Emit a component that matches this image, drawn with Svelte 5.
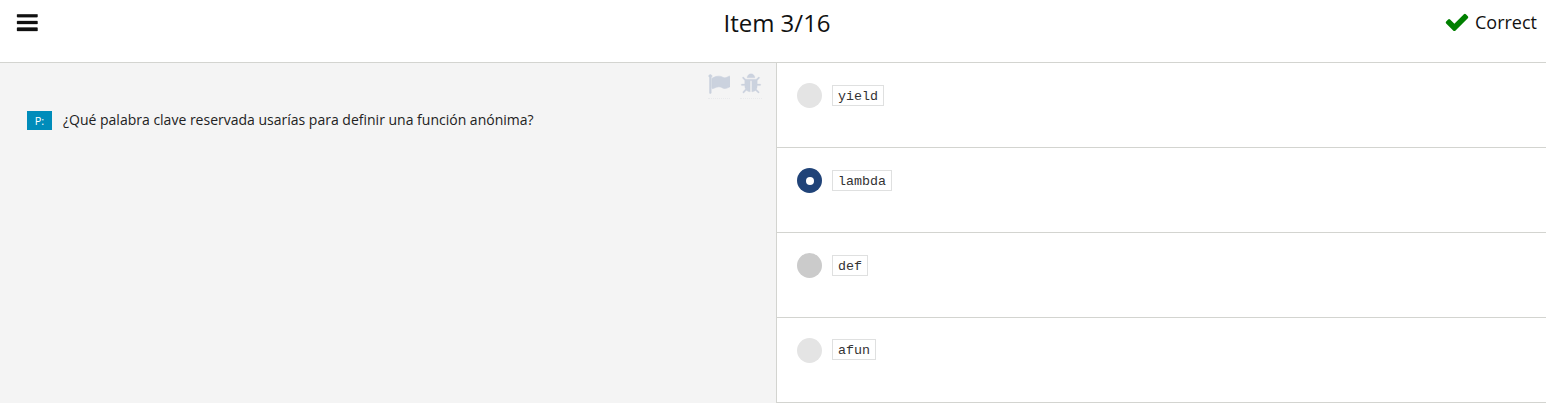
<script>
  const options = [
    { label: 'yield', state: 'idle' },
    { label: 'lambda', state: 'selected' },
    { label: 'def', state: 'hover' },
    { label: 'afun', state: 'idle' }
  ];
</script>

<div class="page">
  <header>
    <button class="menu" aria-label="Menu">
      <svg width="22" height="18" viewBox="0 0 22 18"><path d="M1.6 .2h19.4q.6 0 .6.6v1.8q0 .6-.6.6H1.6q-.6 0-.6-.6V.8q0-.6.6-.6zM1.6 7h19.4q.6 0 .6.6v1.8q0 .6-.6.6H1.6q-.6 0-.6-.6V7.600q0-.6.6-.6zM1.6 13.600h19.400q.6 0 .6.6v2.200q0 .6-.6.6H1.600q-.6 0-.6-.6v-2.200q0-.6.6-.6z" fill="#111" stroke="#111" stroke-width=".3" /></svg>
    </button>
    <h1>Item 3/16</h1>
    <div class="result">
      <svg width="26" height="26" viewBox="0 0 1792 1792"><path fill="#008000" d="M1671 566q0 40-28 68l-724 724-136 136q-28 28-68 28t-68-28l-136-136-362-362q-28-28-28-68t28-68l136-136q28-28 68-28t68 28l294 295 656-657q28-28 68-28t68 28l136 136q28 28 28 68z" /></svg>
      <span>Correct</span>
    </div>
  </header>
  <main>
    <section class="question">
      <div class="tools">
        <span class="tool"><svg width="22" height="22" viewBox="0 0 1792 1792"><path stroke-width="50" d="M320 256q0 72-64 110v1266q0 13-9.5 22.5t-22.5 9.5h-64q-13 0-22.5-9.5t-9.5-22.5v-1266q-64-38-64-110 0-53 37.5-90.5t90.5-37.5 90.5 37.5 37.5 90.5zm1472 64v763q0 25-12.5 38.5t-39.5 27.5q-215 116-369 116-61 0-123.5-22t-108.5-48-115.5-48-142.5-22q-192 0-464 146-17 9-33 9-26 0-45-19t-19-45v-742q0-32 31-55 21-14 79-43 236-120 421-120 107 0 200 29t219 88q38 19 88 19 54 0 117.5-21t110-47 88-47 54.5-21q26 0 45 19t19 45z" /></svg></span>
        <span class="tool"><svg width="22" height="22" viewBox="0 0 1792 1792"><path stroke-width="20" d="M1696 960q0 26-19 45t-45 19h-224q0 171-67 290l208 209q19 19 19 45t-19 45q-18 19-45 19t-45-19l-198-197q-5 5-15 13t-42 28.5-65 36.5-82 29-97 13v-896h-128v896q-51 0-101.5-13.5t-87-33-66-39-43.5-32.5l-15-14-183 207q-20 21-48 21-24 0-43-16-19-18-20.5-44.5t15.5-46.5l202-227q-58-114-58-274h-224q-26 0-45-19t-19-45 19-45 45-19h224v-294l-173-173q-19-19-19-45t19-45 45-19 45 19l173 173h844l173-173q19-19 45-19t45 19 19 45-19 45l-173 173v294h224q26 0 45 19t19 45zm-480-576h-640q0-133 93.5-226.500t226.500-93.500 226.500 93.500 93.500 226.500z" /></svg></span>
      </div>
      <div class="prompt">
        <span class="tag">P:</span>
        <p>¿Qué palabra clave reservada usarías para definir una función anónima?</p>
      </div>
    </section>
    <section class="answers">
      {#each options as option}
        <div class="row">
          <span class="radio {option.state}"></span>
          <code>{option.label}</code>
        </div>
      {/each}
    </section>
  </main>
</div>

<style>
  :global(body) { margin: 0; background: #fff; }
  .page {
    height: 403px;
    overflow: hidden;
    display: flex;
    flex-direction: column;
    font-family: "Open Sans", "Noto Sans", sans-serif;
    color: #111;
  }
  header {
    box-sizing: border-box;
    height: 63px;
    border-bottom: 1px solid #d3d4d0;
    display: grid;
    grid-template-columns: 1fr auto 1fr;
    align-items: start;
    padding: 0 9px 0 16px;
  }
  .menu {
    border: 0;
    padding: 14px 0 0;
    background: none;
    justify-self: start;
    line-height: 0;
  }
  h1 { margin: 0; padding: 6px 0 0 1px; font-size: 24px; line-height: 33px; font-weight: 400; }
  .result {
    justify-self: end;
    display: flex;
    align-items: center;
    gap: 4.5px;
    padding-top: 9px;
    font-size: 18px;
    line-height: 26px;
  }
  main { flex: 1; display: grid; grid-template-columns: 776px 1fr; }
  .question { background: #f4f4f4; }
  .tools {
    display: flex;
    justify-content: flex-end;
    gap: 10px;
    padding: 10px 14px 0 0;
  }
  .tool { height: 25px; border-bottom: 1px dotted #e9eaec; }
  .tools svg { display: block; fill: #cbd2de; stroke: #cbd2de; }
  .prompt { display: flex; align-items: center; gap: 11px; padding: 11px 0 0 27px; }
  .tag {
    width: 25px;
    height: 19px;
    background: #008cba;
    color: #fff;
    font-size: 11px;
    line-height: 20px;
    text-align: center;
  }
  p { margin: 0; font-size: 14px; line-height: 20px; color: #222; }
  .answers { border-left: 1px solid #d3d4d0; }
  .row {
    box-sizing: border-box;
    height: 85px;
    border-bottom: 1px solid #d3d4d0;
    display: flex;
    align-items: flex-start;
    gap: 10px;
    padding: 20px 0 0 20px;
  }
  .radio {
    width: 25px;
    height: 25px;
    border-radius: 50%;
    background: #e4e4e4;
    display: flex;
    align-items: center;
    justify-content: center;
  }
  .radio.hover { background: #cbcbcb; }
  .radio.selected { background: #204378; }
  .radio.selected::after { content: ""; width: 8px; height: 8px; border-radius: 50%; background: #fff; }
  code {
    box-sizing: border-box;
    height: 21px;
    margin-top: 2px;
    border: 1px solid #dfe0e0;
    padding: 0 5px;
    font: 13.33px/21px "Courier New", "Liberation Mono", monospace;
    color: #333;
  }
  .row:last-child code { margin-top: 1px; }
</style>
